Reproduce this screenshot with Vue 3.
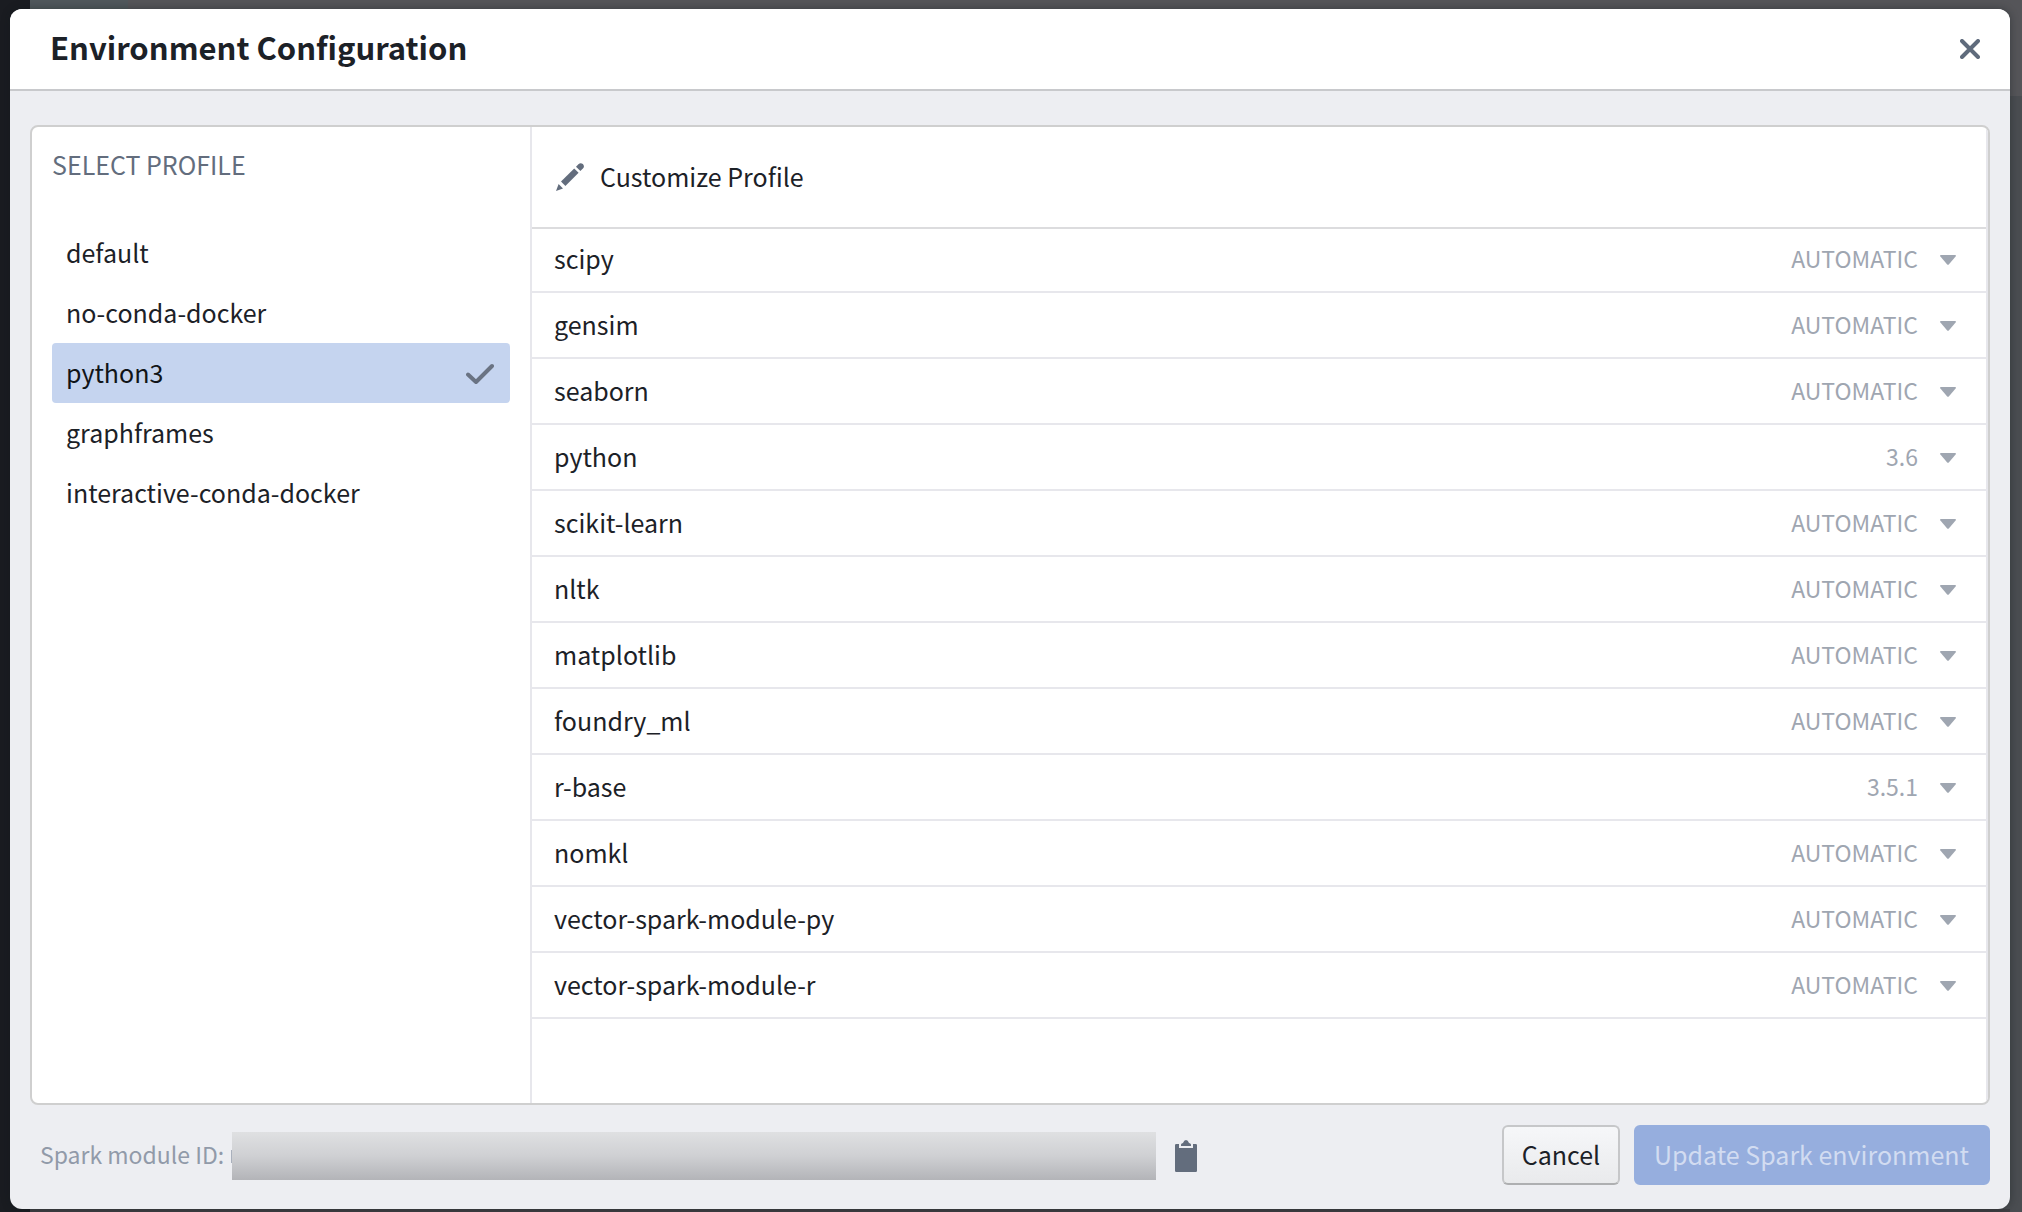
<script setup>
import { ref, reactive } from 'vue'

const profiles = ['default', 'no-conda-docker', 'python3', 'graphframes', 'interactive-conda-docker']
const selected = ref('python3')

const packages = reactive([
  { name: 'scipy', version: 'AUTOMATIC' },
  { name: 'gensim', version: 'AUTOMATIC' },
  { name: 'seaborn', version: 'AUTOMATIC' },
  { name: 'python', version: '3.6' },
  { name: 'scikit-learn', version: 'AUTOMATIC' },
  { name: 'nltk', version: 'AUTOMATIC' },
  { name: 'matplotlib', version: 'AUTOMATIC' },
  { name: 'foundry_ml', version: 'AUTOMATIC' },
  { name: 'r-base', version: '3.5.1' },
  { name: 'nomkl', version: 'AUTOMATIC' },
  { name: 'vector-spark-module-py', version: 'AUTOMATIC' },
  { name: 'vector-spark-module-r', version: 'AUTOMATIC' },
])
</script>

<template>
  <div class="backdrop">
    <section class="dialog" role="dialog" aria-labelledby="dialog-title">
      <header class="dialog-header">
        <h1 id="dialog-title">Environment Configuration</h1>
        <button class="icon-button" type="button" aria-label="Close">
          <svg width="20" height="20" viewBox="0 0 20 20"><path d="M2 2 18 18M18 2 2 18" fill="none" stroke="#5f6b7c" stroke-width="4" stroke-linecap="round" /></svg>
        </button>
      </header>

      <main class="panel">
        <nav class="sidebar" aria-labelledby="profile-title">
          <h2 id="profile-title">SELECT PROFILE</h2>
          <button
            v-for="p in profiles"
            :key="p"
            type="button"
            class="profile"
            :class="{ active: p === selected }"
            @click="selected = p"
          >
            <span class="text">{{ p }}</span>
            <svg v-if="p === selected" width="28" height="22" viewBox="0 0 28 22"><path d="M2 11.5 10 19 26 3" fill="none" stroke="#6a7383" stroke-width="4" stroke-linecap="round" stroke-linejoin="round" /></svg>
          </button>
        </nav>

        <div class="content">
          <div class="content-header">
            <svg width="28" height="28" viewBox="0 0 28 28" fill="#636d7d">
              <path d="M0 28 2.6 21 7 25.4Z" />
              <path d="M5 18.6 18.2 5.4 22.6 9.8 9.4 23Z" />
              <path d="M20 3.7 22.4 1.2Q24.6-.8 26.9 1.1 29 3.4 26.9 5.6L24.4 8Z" />
            </svg>
            <h2 class="text">Customize Profile</h2>
          </div>
          <ul class="packages">
            <li v-for="(pkg, i) in packages" :key="pkg.name">
              <label class="text" :for="'pkg-' + i">{{ pkg.name }}</label>
              <span class="version">
                <select :id="'pkg-' + i" v-model="pkg.version" class="text">
                  <option>{{ pkg.version }}</option>
                </select>
                <svg width="16" height="10" viewBox="0 0 16 10"><path d="M1 0H15Q16.6.2 15.6 1.4L8.8 9.4Q8 10.3 7.2 9.4L.4 1.4Q-.6.2 1 0Z" fill="#9fa6b1" /></svg>
              </span>
            </li>
          </ul>
        </div>
      </main>

      <footer class="dialog-footer">
        <span class="module-label text">Spark module ID:</span>
        <span class="module-id"></span>
        <button class="icon-button" type="button" aria-label="Copy module ID">
          <svg width="22" height="32" viewBox="0 0 22 32" fill="#636d7d">
            <path d="M6 6V4.6Q6.4 3.4 8 3Q9 0 11 0T14 3Q15.6 3.4 16 4.6V6Z" />
            <path d="M1.2 4H4V8H18V4H20.8Q22 4 22 5.2V30.8Q22 32 20.8 32H1.2Q0 32 0 30.8V5.2Q0 4 1.2 4Z" />
          </svg>
        </button>
        <div class="actions">
          <button class="button cancel" type="button">Cancel</button>
          <button class="button primary" type="button" disabled>Update Spark environment</button>
        </div>
      </footer>
    </section>
  </div>
</template>

<style>
body {
  margin: 0;
}
</style>

<style scoped>
.backdrop {
  box-sizing: border-box;
  display: flex;
  min-height: 100vh;
  padding: 9px 12px 3px 10px;
  font-family: 'Noto Sans CJK SC', 'Noto Sans', sans-serif;
  font-size: 25px;
  line-height: 36px;
  color: #1c2127;
  background:
    linear-gradient(#1a1c21, #1a1c21) 0 0 / 30px 100% no-repeat,
    linear-gradient(#50585c, #50585c) 30px 0 / 98px 9px no-repeat,
    linear-gradient(#3f3f43, #3f3f43) 0 100% / calc(100% - 12px) 3px no-repeat,
    linear-gradient(#555559, #555559) 0 0 / 100% 96px no-repeat,
    #4a4d51;
}

.dialog {
  display: flex;
  flex: 1;
  flex-direction: column;
  min-width: 0;
  overflow: hidden;
  border-radius: 12px;
  background: #edeef2;
  box-shadow: 0 0 8px rgba(16, 22, 26, 0.4);
}

h1,
h2 {
  margin: 0;
  font-size: inherit;
  font-weight: 400;
}

button,
select {
  font: inherit;
  color: inherit;
}

svg {
  display: block;
  flex: none;
}

/* The font sits low in its line box; this centres it optically. */
.text {
  padding: 0 0 2px;
}

.dialog-header {
  display: flex;
  align-items: center;
  justify-content: space-between;
  height: 80px;
  padding: 0 30px 0 40px;
  border-bottom: 2px solid #c8c9cc;
  background: #fff;
}

.dialog-header h1 {
  padding-bottom: 4px;
  font-size: 31px;
  font-weight: 700;
}

.icon-button {
  padding: 0;
  border: 0;
  background: none;
}

.panel {
  display: flex;
  flex: 1;
  margin: 34px 20px 20px;
  overflow: hidden;
  border: 2px solid #cfcfcf;
  border-radius: 8px;
  background: #fff;
}

.sidebar {
  box-sizing: border-box;
  flex: none;
  width: 500px;
  padding: 19px 20px 20px;
  border-right: 2px solid #e7e7ec;
}

.sidebar h2 {
  margin-bottom: 41px;
  color: #636d7d;
}

.profile {
  display: flex;
  align-items: center;
  justify-content: space-between;
  width: 100%;
  height: 60px;
  padding: 0 16px 0 14px;
  border: 0;
  border-radius: 4px;
  background: none;
}

.profile svg {
  margin-top: 2px;
}

.profile.active {
  color: #111418;
  background: #c5d4ef;
}

.content {
  flex: 1;
  min-width: 0;
  border-right: 2px solid #e7e7ec;
}

.content-header {
  display: flex;
  gap: 16px;
  align-items: center;
  height: 100px;
  padding: 0 24px;
  border-bottom: 2px solid #dcdcde;
}

.packages {
  margin: -2px 0 0;
  padding: 0;
  list-style: none;
}

.packages li {
  display: flex;
  align-items: center;
  justify-content: space-between;
  height: 64px;
  padding: 0 30px 0 22px;
  border-bottom: 2px solid #e7e7ec;
}

.version {
  display: flex;
  gap: 22px;
  align-items: center;
  color: #9fa6b1;
}

.version select {
  border: 0;
  background: none;
  appearance: none;
  font-size: 23px;
  text-align-last: right;
}

.version svg {
  margin-top: 2px;
}

.dialog-footer {
  display: flex;
  align-items: center;
  height: 60px;
  padding: 0 20px 24px 30px;
}

.module-label {
  color: #919aa9;
  font-size: 23px;
}

.module-id {
  position: relative;
  flex: none;
  width: 924px;
  height: 48px;
  margin: 2px 19px 0 8px;
  background: linear-gradient(#dfe0e2, #cfd0d3 50%, #b3b4b8);
}

.module-id::before {
  position: absolute;
  top: 18px;
  left: -1px;
  width: 1px;
  height: 13px;
  background: #a9b0bc;
  content: '';
}

.dialog-footer .icon-button {
  margin-top: 2px;
}

.actions {
  display: flex;
  gap: 14px;
  margin-left: auto;
}

.button {
  box-sizing: border-box;
  height: 60px;
  padding: 0 18px 2px;
  border: 2px solid transparent;
  border-radius: 6px;
}

.cancel {
  border-color: #c6c7c9 #c6c7c9 #aeafb1;
  background: linear-gradient(#f6f7f9, #e9eaec);
}

.primary {
  padding: 0 19px 2px 18px;
  border-color: #96aede;
  background: #96aede;
  color: #d2dcf1;
}
</style>
